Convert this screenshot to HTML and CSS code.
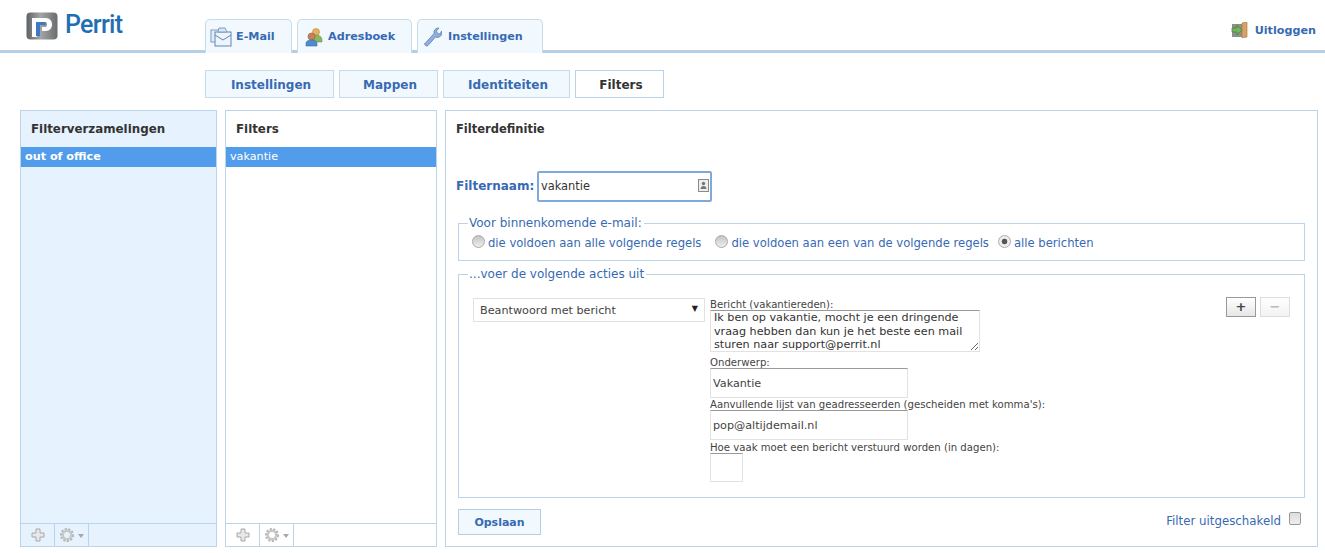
FILE: index.html
```html
<!DOCTYPE html>
<html lang="nl">
<head>
<meta charset="utf-8">
<title>Perrit webmail - Filters</title>
<link rel="stylesheet" href="styles.css">
</head>
<body>
<header class="topbar">
  <a class="logo" href="#">
    <svg class="logo-mark" width="32" height="28" viewBox="0 0 32 28">
      <defs>
        <linearGradient id="logoGrey" x1="0" y1="0" x2="1" y2="0">
          <stop offset="0" stop-color="#5f6264"/>
          <stop offset="0.45" stop-color="#a3a5a7"/>
          <stop offset="1" stop-color="#6a6d6f"/>
        </linearGradient>
      </defs>
      <rect x="0.500" y="0.500" width="31" height="27" rx="4" fill="url(#logoGrey)"/>
      <path d="M6 6h14a6 6 0 0 1 6 6v1a6 6 0 0 1-6 6h-4v-4h3a2 2 0 0 0 2-2v-1a2 2 0 0 0-2-2H11v15H6z" fill="#fff"/>
      <path d="M10 10h9.500v3H14v11h-4z" fill="#3d79c4"/>
    </svg>
    <span class="logo-text">Perrit</span>
  </a>
  <nav class="main-tabs">
    <a class="main-tab tab-mail" href="#">
      <svg width="22" height="20" viewBox="0 0 22 20">
        <rect x="1" y="3" width="12" height="12" fill="#e4eef8" stroke="#7c9cc0"/>
        <rect x="5" y="5" width="16" height="14" fill="#eef4fb" stroke="#5f86b3"/>
        <path d="M5 8l8 5 8-5" fill="none" stroke="#5f86b3"/>
        <path d="M9 1h6l2 4H8z" fill="#dbe7f3" stroke="#7c9cc0"/>
      </svg>
      <span>E-Mail</span>
    </a>
    <a class="main-tab tab-book" href="#">
      <svg width="18" height="20" viewBox="0 0 18 20">
        <circle cx="11" cy="5" r="3.500" fill="#e8b25c" stroke="#b98633" stroke-width="0.600"/>
        <path d="M7 14c0-4 2-6 4-6s6 1 6 5v2H7z" fill="#8ab661" stroke="#6c9447" stroke-width="0.600"/>
        <circle cx="6.500" cy="9.500" r="3.500" fill="#c98255" stroke="#93583a" stroke-width="0.600"/>
        <path d="M1 19v-2c0-3 2-4 5.500-4s5.500 1 5.500 4v2z" fill="#4f8ccf" stroke="#356ca6" stroke-width="0.600"/>
      </svg>
      <span>Adresboek</span>
    </a>
    <a class="main-tab tab-settings" href="#">
      <svg width="18" height="20" viewBox="0 0 18 20">
        <path d="M1 16.500L10 6.500a4.500 4.500 0 0 1 5-5.500l-2.500 3 1 2.500 2.500.5 1.500-3a4.500 4.500 0 0 1-6 6l-7.500 8.500a2 2 0 0 1-3-2.500z" fill="#8fb0dc" stroke="#5f83b5" stroke-width="0.800"/>
      </svg>
      <span>Instellingen</span>
    </a>
  </nav>
  <a class="logout" href="#">
    <svg width="18" height="16" viewBox="0 0 18 16">
      <path d="M1 2h13v13H1z" fill="#8d8f88"/>
      <path d="M11 1l5-1v15l-5 1z" fill="#d6a266" stroke="#a8743a" stroke-width="0.600"/>
      <path d="M1 6h5V3l5 5-5 5v-3H1z" fill="#74b65c" stroke="#3f7f3a" stroke-width="0.700"/>
    </svg>
    <span>Uitloggen</span>
  </a>
</header>

<nav class="sub-tabs">
  <a class="sub-tab w-settings" href="#">Instellingen</a>
  <a class="sub-tab w-folders" href="#">Mappen</a>
  <a class="sub-tab w-ident" href="#">Identiteiten</a>
  <a class="sub-tab w-filters is-active" href="#">Filters</a>
</nav>

<main class="workspace">
  <section class="list-panel sets">
    <h2 class="panel-title">Filterverzamelingen</h2>
    <ul class="rows">
      <li class="row selected bold">out of office</li>
    </ul>
    <div class="list-footer">
      <button class="foot-btn add" type="button" aria-label="Toevoegen">
        <svg width="14" height="14" viewBox="0 0 14 14"><path d="M5 1h4v4h4v4H9v4H5V9H1V5h4z" fill="#e8e8e8" stroke="#a8a8a8"/></svg>
      </button>
      <button class="foot-btn gear" type="button" aria-label="Acties">
        <svg width="26" height="16" viewBox="0 0 26 16">
          <circle cx="8" cy="8" r="5.500" fill="none" stroke="#b4b4b4" stroke-width="3" stroke-dasharray="2 1.300"/>
          <circle cx="8" cy="8" r="4.200" fill="none" stroke="#c8c8c8" stroke-width="2.400"/>
          <path d="M19 7h6l-3 4z" fill="#a8a8a8"/>
        </svg>
      </button>
    </div>
  </section>

  <section class="list-panel filters">
    <h2 class="panel-title">Filters</h2>
    <ul class="rows">
      <li class="row selected">vakantie</li>
    </ul>
    <div class="list-footer">
      <button class="foot-btn add" type="button" aria-label="Toevoegen">
        <svg width="14" height="14" viewBox="0 0 14 14"><path d="M5 1h4v4h4v4H9v4H5V9H1V5h4z" fill="#e8e8e8" stroke="#a8a8a8"/></svg>
      </button>
      <button class="foot-btn gear" type="button" aria-label="Acties">
        <svg width="26" height="16" viewBox="0 0 26 16">
          <circle cx="8" cy="8" r="5.500" fill="none" stroke="#b4b4b4" stroke-width="3" stroke-dasharray="2 1.300"/>
          <circle cx="8" cy="8" r="4.200" fill="none" stroke="#c8c8c8" stroke-width="2.400"/>
          <path d="M19 7h6l-3 4z" fill="#a8a8a8"/>
        </svg>
      </button>
    </div>
  </section>

  <section class="definition">
    <h2 class="def-title">Filterdefinitie</h2>
    <div class="name-line">
      <label class="name-label" for="filtername">Filternaam:</label>
      <div class="name-field">
        <input id="filtername" class="name-input" type="text" value="vakantie">
        <svg class="name-icon" width="11" height="13" viewBox="0 0 11 13">
          <rect x="0.500" y="0.500" width="10" height="12" fill="#eee" stroke="#8a8a8a"/>
          <circle cx="5.500" cy="4.500" r="1.700" fill="#777"/>
          <path d="M2.500 10c0-2 1.300-3 3-3s3 1 3 3z" fill="#777"/>
        </svg>
      </div>
    </div>

    <fieldset class="group scope">
      <legend>Voor binnenkomende e-mail:</legend>
      <label class="choice"><input type="radio" name="scope"><span>die voldoen aan alle volgende regels</span></label>
      <label class="choice"><input type="radio" name="scope"><span>die voldoen aan een van de volgende regels</span></label>
      <label class="choice tight"><input type="radio" name="scope" checked><span>alle berichten</span></label>
    </fieldset>

    <fieldset class="group actions">
      <legend>...voer de volgende acties uit</legend>
      <div class="action-row">
        <div class="select-wrap">
          <select class="action-select">
            <option>Beantwoord met bericht</option>
          </select>
        </div>
        <div class="action-fields">
          <label class="mini-label">Bericht (vakantiereden):</label>
          <textarea class="msg" rows="3">Ik ben op vakantie, mocht je een dringende vraag hebben dan kun je het beste een mail sturen naar support@perrit.nl</textarea>
          <label class="mini-label">Onderwerp:</label>
          <input class="text-input wide" type="text" value="Vakantie">
          <label class="mini-label">Aanvullende lijst van geadresseerden (gescheiden met komma's):</label>
          <input class="text-input wide gap-after" type="text" value="pop@altijdemail.nl">
          <label class="mini-label">Hoe vaak moet een bericht verstuurd worden (in dagen):</label>
          <input class="text-input short" type="text">
        </div>
        <div class="row-buttons">
          <button class="step" type="button">+</button>
          <button class="step off" type="button">−</button>
        </div>
      </div>
    </fieldset>

    <div class="def-footer">
      <button class="save" type="button">Opslaan</button>
      <label class="disable">
        <span>Filter uitgeschakeld</span>
        <input type="checkbox">
      </label>
    </div>
  </section>
</main>
</body>
</html>
```
FILE: styles.css
```css
* { box-sizing: border-box; }

html, body {
  margin: 0;
  height: 553px;
  overflow: hidden;
  background: #fff;
  color: #333;
  font-family: "DejaVu Sans", Verdana, sans-serif;
  font-size: 11px;
}

a { text-decoration: none; color: #376ab3; }
ul { list-style: none; margin: 0; padding: 0; }
h2 { margin: 0; }
svg { flex: none; }

/* Top bar */
.topbar {
  height: 53px;
  display: flex;
  border-bottom: 3px solid #b4cfe3;
}

.logo {
  width: 205px;
  padding: 12px 0 0 26px;
  display: flex;
  align-items: flex-start;
  gap: 7px;
}

.logo-text {
  font-family: Roboto, sans-serif;
  font-weight: 500;
  font-size: 25px;
  line-height: 26px;
  letter-spacing: -0.7px;
  color: #1f70b2;
}

.main-tabs {
  display: flex;
  gap: 5px;
  padding-top: 19px;
  height: 50px;
}

.main-tab {
  height: 34px;
  display: flex;
  align-items: center;
  border: 1px solid #c5dcec;
  border-bottom: 0;
  border-radius: 5px 5px 0 0;
  background: #f1f9ff;
  font-weight: bold;
  font-size: 11.200px;
}

.tab-mail { width: 87px; padding-left: 4px; gap: 4px; }
.tab-book { width: 115px; padding-left: 7px; gap: 5px; }
.tab-settings { width: 126px; padding-left: 6px; gap: 6px; }

.logout {
  margin-left: auto;
  margin-right: 9px;
  margin-top: 22px;
  height: 16px;
  display: flex;
  align-items: center;
  gap: 6px;
  font-weight: bold;
  font-size: 11.200px;
}

/* Second level navigation */
.sub-tabs {
  display: flex;
  gap: 5px;
  padding: 17px 0 0 205px;
  height: 57px;
}

.sub-tab {
  height: 28px;
  display: flex;
  align-items: center;
  justify-content: center;
  padding: 1px 0 0 3px;
  border: 1px solid #c5dcec;
  background: #f1f9ff;
  font-weight: bold;
  font-size: 12px;
}

.w-settings { width: 129px; }
.w-folders { width: 99px; }
.w-ident { width: 127px; }
.w-filters { width: 89px; }

.sub-tab.is-active {
  background: #fff;
  color: #333;
  border-color: #b9d3ea;
}

/* Panels */
.workspace {
  display: flex;
  padding-left: 20px;
  height: 437px;
}

.list-panel {
  display: flex;
  flex-direction: column;
  border: 1px solid #bcd4ea;
}

.sets {
  width: 197px;
  margin-right: 8px;
  background: #e6f2fd;
}

.filters {
  width: 212px;
  margin-right: 8px;
  background: #fff;
}

.panel-title {
  height: 36px;
  padding: 11px 0 0 10px;
  font-size: 11.850px;
  line-height: 15px;
  font-weight: bold;
  color: #333;
}

.rows { flex: 1; }

.row {
  height: 20px;
  padding-left: 4px;
  line-height: 19px;
  font-size: 11.200px;
  background: #519deb;
  color: #fff;
}

.bold { font-weight: bold; }

.list-footer {
  height: 23px;
  display: flex;
  border-top: 1px solid #bcd4ea;
}

.foot-btn {
  width: 34px;
  display: flex;
  align-items: center;
  justify-content: center;
  padding: 0;
  background: none;
  border: 0;
  border-right: 1px solid #bcd4ea;
}

/* Filter definition */
.definition {
  width: 873px;
  border: 1px solid #bcd4ea;
  padding: 0 10px;
}

.def-title {
  padding-top: 11px;
  height: 60px;
  font-size: 11.500px;
  line-height: 15px;
  font-weight: bold;
  color: #333;
}

.name-line {
  height: 30px;
  display: flex;
  align-items: center;
  margin-bottom: 15px;
}

.name-label {
  width: 81px;
  font-size: 12px;
  font-weight: bold;
  color: #376ab3;
}

.name-field {
  position: relative;
  width: 175px;
  height: 31px;
}

.name-input {
  width: 100%;
  height: 100%;
  padding: 0 2px;
  border: 2px solid #7fa9dc;
  border-radius: 2px;
  font: 11.400px "DejaVu Sans", Verdana, sans-serif;
  color: #333;
  outline: 0;
}

.name-icon {
  position: absolute;
  right: 3px;
  top: 8px;
}

.group {
  margin: 0;
  border: 1px solid #bcd4ea;
  min-width: 0;
  color: #376ab3;
  font-size: 11.600px;
}

.group legend {
  padding: 0 2px 0 1px;
  line-height: 14px;
  font-size: 12px;
  color: #376ab3;
}

.scope {
  width: 847px;
  height: 45px;
  display: flex;
  align-items: flex-start;
  gap: 14px;
  margin: 0 0 6px 2px;
  padding: 5px 0 0 13px;
}

.scope legend { margin-left: -4px; }

.choice {
  display: flex;
  align-items: center;
  gap: 3px;
  height: 16px;
}

.choice.tight { margin-left: -5px; }

.choice input {
  appearance: none;
  margin: 0;
  width: 13px;
  height: 13px;
  border: 1px solid #aaa;
  border-radius: 50%;
  background: linear-gradient(#c4c4c4, #eee);
  position: relative;
  top: -2px;
}

.choice input:checked {
  background: radial-gradient(circle, #555 0 2.500px, #eee 3.200px);
}

.actions {
  width: 847px;
  height: 231px;
  margin-left: 2px;
  padding: 17px 14px 0 14px;
}

.actions legend { margin-left: -5px; }

.action-row { display: flex; }

.select-wrap {
  position: relative;
  width: 232px;
  height: 24px;
  margin-right: 5px;
  flex: none;
}

.select-wrap::after {
  content: "▼";
  position: absolute;
  right: 7px;
  top: 6px;
  font-size: 8px;
  color: #222;
}

.action-select {
  appearance: none;
  width: 100%;
  height: 100%;
  padding: 1px 0 0 6px;
  border: 1px solid #e2e2e2;
  background: #fff;
  font: 11.200px "DejaVu Sans", Verdana, sans-serif;
  color: #444;
  border-radius: 0;
}

.action-fields {
  width: 516px;
  display: flex;
  flex-direction: column;
  align-items: flex-start;
}

.mini-label {
  font-size: 10.150px;
  line-height: 12px;
  height: 12px;
  padding-top: 1px;
  color: #444;
  white-space: nowrap;
}

.msg {
  width: 270px;
  height: 42px;
  margin-bottom: 4px;
  padding: 0 3px;
  border: 1px solid #e2e2e2;
  border-top-color: #999;
  font: 11.200px/13.500px "DejaVu Sans", Verdana, sans-serif;
  color: #333;
  overflow: hidden;
  resize: both;
}

.text-input {
  height: 30px;
  padding: 0 2px;
  border: 1px solid #e2e2e2;
  border-top-color: #999;
  font: 11.200px "DejaVu Sans", Verdana, sans-serif;
  color: #444;
  outline: 0;
}

.wide { width: 198px; }
.short { width: 33px; height: 29px; }
.gap-after { margin-bottom: 1px; }

.row-buttons {
  display: flex;
  gap: 4px;
  margin-left: auto;
  margin-top: -1px;
}

.step {
  width: 30px;
  height: 20px;
  padding: 0;
  border: 1px solid #999;
  background: linear-gradient(#fff, #e6e6e6);
  font: bold 13px/16px "DejaVu Sans", sans-serif;
  color: #444;
}

.step.off {
  border-color: #ddd;
  background: linear-gradient(#fff, #f2f2f2);
  color: #bbb;
}

.def-footer {
  height: 40px;
  display: flex;
  align-items: flex-start;
  justify-content: space-between;
  padding: 11px 6px 0 2px;
}

.save {
  width: 83px;
  height: 26px;
  padding: 0;
  border: 1px solid #b4cfe3;
  background: #f1f9ff;
  font: bold 11px "DejaVu Sans", Verdana, sans-serif;
  color: #376ab3;
}

.disable {
  display: flex;
  gap: 8px;
  color: #376ab3;
  font-size: 11.800px;
  align-items: flex-start;
  padding-top: 3px;
}

.disable span { margin-top: 2px; }

.disable input {
  appearance: none;
  width: 12px;
  height: 13px;
  margin: 0;
  border: 1px solid #999;
  border-radius: 2px;
  background: linear-gradient(#ddd, #eee);
}
```
